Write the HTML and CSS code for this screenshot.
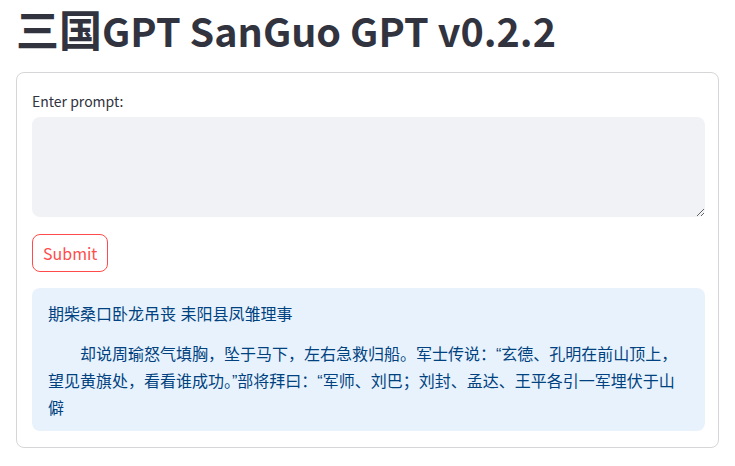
FILE: index.html
```html
<!DOCTYPE html>
<html lang="zh-CN">
<head>
<meta charset="utf-8">
<title>三国GPT</title>
<link rel="stylesheet" href="styles.css">
</head>
<body>
<main class="app">
  <h1 class="title"><span class="title-cjk">三国</span>GPT SanGuo GPT v0.2.2</h1>
  <form class="form">
    <label class="label" for="prompt">Enter prompt:</label>
    <textarea id="prompt" class="prompt"></textarea>
    <div class="actions">
      <button type="button" class="submit">Submit</button>
    </div>
    <div class="info">
      <p class="para">期柴桑口卧龙吊丧 耒阳县凤雏理事</p>
      <p class="para indent">却说周瑜怒气填胸，坠于马下，左右急救归船。军士传说：“玄德、孔明在前山顶上，望见黄旗处，看看谁成功。”部将拜曰：“军师、刘巴；刘封、孟达、王平各引一军埋伏于山僻</p>
    </div>
  </form>
</main>
</body>
</html>
```

FILE: styles.css
```css
html, body {
  margin: 0;
  padding: 0;
  background: #ffffff;
}

body {
  font-family: "Noto Sans CJK SC", "Noto Sans", sans-serif;
  color: #31333f;
}

.app {
  padding: 0 16px;
}

.title {
  margin: 0;
  padding: 0 0 14px 0;
  font-size: 39.5px;
  line-height: 56px;
  font-weight: 700;
  color: #31333f;
}

.title-cjk {
  font-size: 43px;
}

.form {
  display: flex;
  flex-direction: column;
  border: 1px solid rgba(49, 51, 63, 0.2);
  border-radius: 8px;
  padding: 16px 13px 16px 15px;
}

.label {
  font-size: 14px;
  line-height: 20px;
  padding-top: 2px;
  margin-bottom: 6px;
  color: #31333f;
}

.prompt {
  display: block;
  height: 100px;
  box-sizing: border-box;
  border: none;
  border-radius: 8px;
  background: #f0f2f6;
  resize: vertical;
  padding: 16px;
  font-family: inherit;
  font-size: 16px;
  outline: none;
  margin: 0;
}

.actions {
  padding-top: 17px;
}

.submit {
  height: 38px;
  padding: 0 10px;
  border: 1px solid #ff4b4b;
  border-radius: 8px;
  background: #ffffff;
  color: #ff4b4b;
  font-family: inherit;
  font-size: 16px;
  line-height: 36px;
}

.info {
  margin-top: 16px;
  background: rgba(28, 131, 225, 0.1);
  border-radius: 8px;
  padding: 13px 16px 9px 16px;
  color: #004280;
  font-family: "Liberation Sans", "Noto Sans CJK SC", sans-serif;
  font-size: 16px;
  line-height: 27px;
}

.para {
  margin: 0 0 13px 0;
}

.para:last-child {
  margin-bottom: 0;
}

.indent {
  text-indent: 2em;
}
```
